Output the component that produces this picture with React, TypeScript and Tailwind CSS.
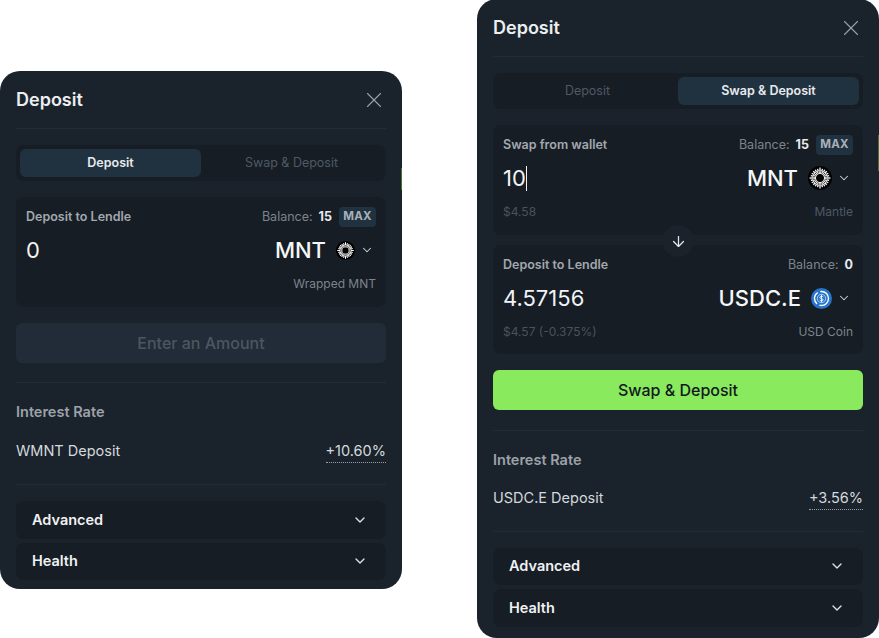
import { ChevronDown, ArrowDown, X } from "lucide-react";

function MantleIcon({ size }: { size: number }) {
  const spokes = Array.from({ length: 24 }, (_, i) => (i * 360) / 24);
  return (
    <svg width={size} height={size} viewBox="0 0 24 24" className="shrink-0">
      <circle cx="12" cy="12" r="12" fill="#000" />
      {spokes.map((a) => (
        <line
          key={a}
          x1="12"
          y1="5"
          x2="12"
          y2={a % 90 === 0 ? "1.5" : "2.5"}
          stroke="#fff"
          strokeWidth="1.3"
          transform={`rotate(${a} 12 12)`}
        />
      ))}
      {spokes.map((a) => (
        <line
          key={`in-${a}`}
          x1="12"
          y1="8"
          x2="12"
          y2="4.5"
          stroke="#fff"
          strokeWidth="1"
          transform={`rotate(${a + 7.5} 12 12)`}
        />
      ))}
    </svg>
  );
}

function UsdcIcon({ size }: { size: number }) {
  return (
    <svg width={size} height={size} viewBox="0 0 24 24" className="shrink-0">
      <circle cx="12" cy="12" r="12" fill="#2775ca" />
      <circle cx="12" cy="12" r="8" fill="none" stroke="#fff" strokeWidth="1.6" strokeDasharray="15 3" />
      <circle cx="12" cy="12" r="4.8" fill="none" stroke="#dbe8f7" strokeWidth="0.8" />
      <path d="M14 10.2c-.5-.8-3.8-1.2-3.9.6-.1 1.8 3.9 1 3.8 2.8-.1 1.6-3.3 1.3-3.9.3M12 7.8v8.4" fill="none" stroke="#fff" strokeWidth="1" />
    </svg>
  );
}

function Tabs({ active }: { active: "Deposit" | "Swap & Deposit" }) {
  return (
    <div className="flex h-[36px] items-center gap-0 rounded-lg bg-[#161d24] px-1">
      {(["Deposit", "Swap & Deposit"] as const).map((t) => (
        <div
          key={t}
          className={
            t === active
              ? "flex h-[28px] flex-1 items-center justify-center rounded-md bg-[#203240] text-[12.5px] font-semibold text-[#e8eaed]"
              : "flex h-[28px] flex-1 items-center justify-center text-[12.5px] text-[#4f5964]"
          }
        >
          {t}
        </div>
      ))}
    </div>
  );
}

function TokenCard({
  label,
  balance,
  max,
  amount,
  caret,
  symbol,
  icon,
  left,
  right,
  rightColor,
  h,
}: {
  label: string;
  balance: string;
  max?: boolean;
  amount: string;
  caret?: boolean;
  symbol: string;
  icon: React.ReactNode;
  left?: string;
  right: string;
  rightColor: string;
  h: string;
}) {
  return (
    <div className={`flex flex-col rounded-lg bg-[#161d24] px-[10px] pt-[10px] ${h}`}>
      <div className="flex h-[20px] items-center justify-between">
        <span className="text-[12.5px] font-semibold text-[#a3a8af]">{label}</span>
        <div className="flex items-center">
          <span className="text-[12.5px] text-[#7d848c]">Balance:</span>
          <span className="ml-[6px] text-[12.5px] font-bold text-[#e8eaed]">{balance}</span>
          {max && (
            <span className="ml-[7px] flex h-[20px] w-[37px] items-center justify-center rounded bg-[#203240] text-[11.5px] font-bold tracking-[0.2px] text-[#a9b0b8]">
              MAX
            </span>
          )}
        </div>
      </div>
      <div className="mt-[7px] flex h-[32px] items-center justify-between">
        <div className="flex items-center text-[22px] text-[#f2f3f5]">
          {amount}
          {caret && <span className="h-[25px] w-px bg-[#f2f3f5]" />}
        </div>
        <div className="flex items-center pr-[2px]">
          <span className="text-[22px] font-medium text-[#f5f6f7]">{symbol}</span>
          <span className="ml-[10px]">{icon}</span>
          <ChevronDown size={14} strokeWidth={1.75} className="ml-[5px] text-[#d5d8dc]" />
        </div>
      </div>
      <div className="mt-[9px] flex items-center justify-between text-[12px]">
        <span className="text-[#4a535d]">{left}</span>
        <span className={rightColor}>{right}</span>
      </div>
    </div>
  );
}

function Collapsed({ title, h }: { title: string; h: string }) {
  return (
    <div className={`flex items-center justify-between rounded-lg bg-[#161d24] pl-4 pr-[18px] ${h}`}>
      <span className="text-[14.5px] font-semibold text-[#f0f1f3]">{title}</span>
      <ChevronDown size={16} strokeWidth={2} className="text-[#e0e2e5]" />
    </div>
  );
}

function Rate({ name, value }: { name: string; value: string }) {
  return (
    <div className="flex items-center justify-between">
      <span className="text-[14.5px] text-[#d5d8dc]">{name}</span>
      <span className="border-b border-dotted border-[#9aa0a7] text-[14.5px] leading-[22px] text-[#d5d8dc]">{value}</span>
    </div>
  );
}

function Header() {
  return (
    <div className="flex h-[58px] items-center justify-between border-b border-[#212c36]">
      <span className="text-[18px] font-semibold text-[#eceef0]">Deposit</span>
      <X size={26} strokeWidth={1} className="mr-[-1px] mt-[1px] text-[#9ba1a8]" />
    </div>
  );
}

export default function App() {
  return (
    <div className="relative flex h-[638px] w-[879px] items-start overflow-hidden bg-white font-['Inter',sans-serif]">
      {/* single deposit modal */}
      <div className="relative mt-[71px] h-[518px] w-[402px] rounded-[20px] bg-[#1a232c] px-4">
        <Header />
        <div className="mt-[16px]">
          <Tabs active="Deposit" />
        </div>
        <div className="mt-[16px]">
          <TokenCard
            label="Deposit to Lendle"
            balance="15"
            max
            amount="0"
            symbol="MNT"
            icon={<MantleIcon size={19} />}
            right="Wrapped MNT"
            rightColor="text-[#7d848c]"
            h="h-[110px]"
          />
        </div>
        <div className="mt-[16px] flex h-[40px] items-center justify-center rounded-md bg-[#212c38] text-[16px] font-medium text-[#4c5661]">
          Enter an Amount
        </div>
        <div className="mt-[19px] border-t border-[#212c36]" />
        <div className="mt-[18px] text-[14.5px] font-semibold text-[#9da2a9]">Interest Rate</div>
        <div className="mt-[17px]">
          <Rate name="WMNT Deposit" value="+10.60%" />
        </div>
        <div className="mt-[21px] border-t border-[#212c36]" />
        <div className="mt-[16px] flex flex-col gap-[4px]">
          <Collapsed title="Advanced" h="h-[38px]" />
          <Collapsed title="Health" h="h-[37px]" />
        </div>
        <div className="absolute right-0 top-[97px] h-[22px] w-px bg-[#46732f]" />
      </div>

      {/* swap and deposit modal */}
      <div className="relative ml-[75px] mt-[-1px] h-[639px] w-[402px] rounded-[20px] bg-[#1a232c] px-4">
        <Header />
        <div className="mt-[16px]">
          <Tabs active="Swap & Deposit" />
        </div>
        <div className="relative mt-[16px] flex flex-col gap-[10px]">
          <TokenCard
            label="Swap from wallet"
            balance="15"
            max
            amount="10"
            caret
            symbol="MNT"
            icon={<MantleIcon size={24} />}
            left="$4.58"
            right="Mantle"
            rightColor="text-[#4f5964]"
            h="h-[110px]"
          />
          <TokenCard
            label="Deposit to Lendle"
            balance="0"
            amount="4.57156"
            symbol="USDC.E"
            icon={<UsdcIcon size={21} />}
            left="$4.57 (-0.375%)"
            right="USD Coin"
            rightColor="text-[#7d848c]"
            h="h-[109px]"
          />
          <div className="absolute left-1/2 top-[100px] flex h-[32px] w-[32px] -translate-x-1/2 items-center justify-center rounded-full bg-[#1a232c]">
            <ArrowDown size={17} strokeWidth={1.75} className="text-[#e8eaed]" />
          </div>
        </div>
        <div className="mt-[16px] flex h-[40px] items-center justify-center rounded-md bg-[#8aea5e] text-[16px] font-medium text-[#11181d]">
          Swap & Deposit
        </div>
        <div className="mt-[20px] border-t border-[#212c36]" />
        <div className="mt-[18px] text-[14.5px] font-semibold text-[#9da2a9]">Interest Rate</div>
        <div className="mt-[16px]">
          <Rate name="USDC.E Deposit" value="+3.56%" />
        </div>
        <div className="mt-[21px] border-t border-[#212c36]" />
        <div className="mt-[16px] flex flex-col gap-[4px]">
          <Collapsed title="Advanced" h="h-[37px]" />
          <Collapsed title="Health" h="h-[38px]" />
        </div>
        <div className="absolute right-0 top-[136px] h-[36px] w-px bg-[#46732f]" />
      </div>
    </div>
  );
}
